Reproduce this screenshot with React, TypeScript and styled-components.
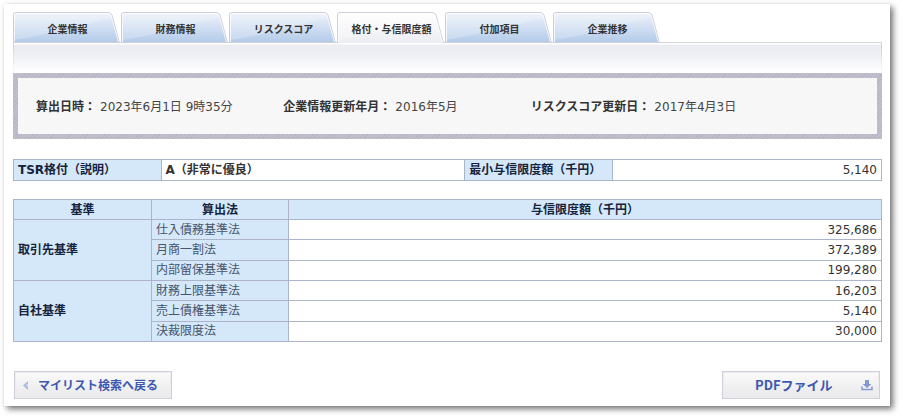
import React from "react";
import styled, { createGlobalStyle } from "styled-components";

const GlobalStyle = createGlobalStyle`
  * { box-sizing: border-box; }
  body {
    margin: 0;
    background: #fff;
    color: #333;
    font: 12px/16px "DejaVu Sans", "Noto Sans CJK JP", sans-serif;
  }
`;

const Card = styled.main`
  margin: 4px 13px 12px 4px;
  padding: 8px 8px 7px 9px;
  background: #fff;
  box-shadow: 3px 3px 6px rgba(0, 0, 0, 0.55), 0 0 1px rgba(0, 0, 0, 0.12);
`;

const TabBar = styled.nav`
  display: flex;
  gap: 1px;
`;

const Tab = styled.a`
  position: relative;
  z-index: 1;
  display: flex;
  align-items: center;
  justify-content: center;
  width: 107px;
  height: 31px;
  margin-bottom: -1px;
  padding: 2px 0 0 2px;
  color: #333;
  font: 700 10px/14px "Noto Sans CJK JP", sans-serif;
  text-decoration: none;
`;

const TabShape = styled.svg`
  position: absolute;
  inset: 0;
  z-index: -1;
  width: 100%;
  height: 100%;
`;

const TabPanelTop = styled.div`
  height: 31px;
  border: solid #d3d3e0;
  border-width: 1px 1px 0;
  border-image: linear-gradient(#d3d3e0 20%, #fff) 1;
  background: linear-gradient(#fff 1px, #ecedf2 2px, #eeeff4 12px, #fff 29px);
`;

const InfoFrame = styled.section`
  padding: 5px;
  background: repeating-linear-gradient(135deg, #b8b6c4 0 1px, #bfbecb 1px 3px);
`;

const InfoList = styled.dl`
  display: grid;
  grid-template-columns: 5fr 5fr 7fr;
  margin: 0;
  padding: 21px 0 19px 18px;
  background: #f7f7f7;
`;

const InfoItem = styled.div`
  display: flex;
  gap: 4px;
  white-space: nowrap;
`;

const InfoLabel = styled.dt`
  font-weight: 700;
`;

const InfoValue = styled.dd`
  margin: 0;
  color: #444;
`;

const Table = styled.table`
  width: 100%;
  margin-top: 20px;
  border-collapse: collapse;
  table-layout: fixed;
`;

const LimitTable = styled(Table)`
  margin-top: 18px;
`;

const HeadCell = styled.th<{ $width?: string; $center?: boolean; $tall?: boolean }>`
  width: ${(p) => p.$width ?? "auto"};
  height: ${(p) => (p.$tall ? "61px" : "20px")};
  padding: 0 4px;
  border: 1px solid #abb4ca;
  background: #d5e8f9;
  color: #16233d;
  text-align: ${(p) => (p.$center ? "center" : "left")};
  white-space: nowrap;
`;

const MethodCell = styled(HeadCell)`
  color: #46546c;
  font-weight: 400;
`;

const Cell = styled.td<{ $width?: string; $number?: boolean }>`
  width: ${(p) => p.$width ?? "auto"};
  padding: 0 4px;
  border: 1px solid #abb4ca;
  font-weight: ${(p) => (p.$number ? 400 : 700)};
  text-align: ${(p) => (p.$number ? "right" : "left")};
`;

const RatingRow = styled.tr`
  height: 21px;
`;

const Actions = styled.footer`
  display: flex;
  justify-content: space-between;
  margin-top: 29px;
  padding: 0 2px 0 1px;
`;

const ActionButton = styled.button`
  display: flex;
  align-items: center;
  justify-content: space-between;
  width: 158px;
  height: 28px;
  padding: 0 13px 0 8px;
  border: 1px solid #cfced9;
  outline: 1px solid #ececf1;
  outline-offset: -2px;
  background: linear-gradient(#fafafa, #e9e9eb);
  color: #3d58b0;
  font: 700 12px/16px "Noto Sans CJK JP", sans-serif;
  white-space: nowrap;
`;

const PdfButton = styled(ActionButton)`
  padding: 0 6px 0 32px;
  font-size: 13px;
`;

const tabs = ["企業情報", "財務情報", "リスクスコア", "格付・与信限度額", "付加項目", "企業推移"];
const activeTab = 3;

const info = [
  ["算出日時：", "2023年6月1日 9時35分"],
  ["企業情報更新年月：", "2016年5月"],
  ["リスクスコア更新日：", "2017年4月3日"],
];

const groups = [
  {
    name: "取引先基準",
    rows: [["仕入債務基準法", "325,686"], ["月商一割法", "372,389"], ["内部留保基準法", "199,280"]],
  },
  {
    name: "自社基準",
    rows: [["財務上限基準法", "16,203"], ["売上債権基準法", "5,140"], ["決裁限度法", "30,000"]],
  },
];

function TabBackground({ active, id }: { active: boolean; id: string }) {
  return (
    <TabShape viewBox="0 0 107 31" preserveAspectRatio="none" aria-hidden="true">
      <defs>
        <linearGradient id={id} x1="0" y1="0" x2="0" y2="1">
          <stop offset="0" stopColor={active ? "#ffffff" : "#edf2fa"} />
          <stop offset="1" stopColor={active ? "#ecedf2" : "#b3cae9"} />
        </linearGradient>
      </defs>
      <path
        d="M.5 31V3Q.5.5 3 .5H95Q98 .5 99 3L106.5 31"
        fill={`url(#${id})`}
        stroke="#cdcddc"
      />
      <path
        d="M1.5 30V3Q1.5 1.5 3 1.5H95Q97.5 1.5 98 3.5L105.5 30"
        fill="none"
        stroke="#fff"
        strokeOpacity=".75"
      />
      <path d="M2 28Q48 20 99 5L96 2H2Z" fill="#fff" fillOpacity=".22" />
      {!active && <path d="M0 30.5H107" stroke="#cdcfdf" />}
    </TabShape>
  );
}

export default function App() {
  return (
    <>
      <GlobalStyle />
      <Card>
        <TabBar>
          {tabs.map((label, i) => (
            <Tab key={label} href="#" aria-current={i === activeTab ? "page" : undefined}>
              <TabBackground active={i === activeTab} id={`tab-fill-${i}`} />
              {label}
            </Tab>
          ))}
        </TabBar>
        <TabPanelTop />
        <InfoFrame>
          <InfoList>
            {info.map(([label, value]) => (
              <InfoItem key={label}>
                <InfoLabel>{label}</InfoLabel>
                <InfoValue>{value}</InfoValue>
              </InfoItem>
            ))}
          </InfoList>
        </InfoFrame>

        <Table>
          <tbody>
            <RatingRow>
              <HeadCell scope="row" $width="17%">TSR格付（説明）</HeadCell>
              <Cell $width="35%">A（非常に優良）</Cell>
              <HeadCell scope="row" $width="17%">最小与信限度額（千円）</HeadCell>
              <Cell $number>5,140</Cell>
            </RatingRow>
          </tbody>
        </Table>

        <LimitTable>
          <thead>
            <tr>
              <HeadCell scope="col" $width="138px" $center>基準</HeadCell>
              <HeadCell scope="col" $width="137px" $center>算出法</HeadCell>
              <HeadCell scope="col" $center>与信限度額（千円）</HeadCell>
            </tr>
          </thead>
          {groups.map((group) => (
            <tbody key={group.name}>
              {group.rows.map(([method, amount], i) => (
                <tr key={method}>
                  {i === 0 && (
                    <HeadCell scope="rowgroup" rowSpan={group.rows.length} $tall>{group.name}</HeadCell>
                  )}
                  <MethodCell scope="row">{method}</MethodCell>
                  <Cell $number>{amount}</Cell>
                </tr>
              ))}
            </tbody>
          ))}
        </LimitTable>

        <Actions>
          <ActionButton type="button">
            <svg width="6" height="9" viewBox="0 0 6 9" aria-hidden="true">
              <path d="M5 0V9L0 4.5Z" fill="#a9b9df" />
              <path d="M5 2.5V6.5L3 4.5Z" fill="#d9e0f1" />
            </svg>
            マイリスト検索へ戻る
          </ActionButton>
          <PdfButton type="button">
            PDFファイル
            <svg width="12" height="11" viewBox="0 0 12 11" aria-hidden="true">
              <path d="M4 0H8V4H10.5L6 8L1.5 4H4Z" fill="#829acf" />
              <path d="M1 6.5V9.5H11V6.5" fill="none" stroke="#829acf" strokeWidth="1.5" />
            </svg>
          </PdfButton>
        </Actions>
      </Card>
    </>
  );
}
